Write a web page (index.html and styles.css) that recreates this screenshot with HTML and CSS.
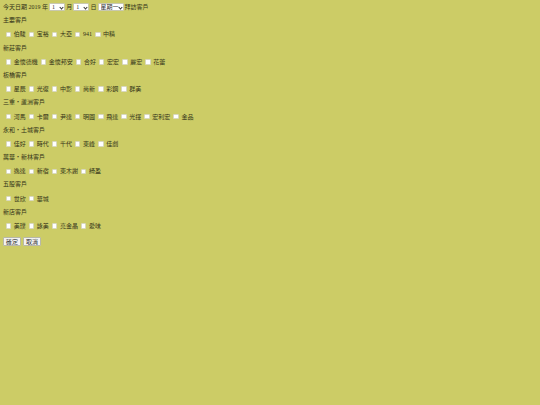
FILE: index.html
```html
<!DOCTYPE html>
<html lang="zh-Hant">
<head>
<meta charset="utf-8">
<title>拜訪客戶</title>
<link rel="stylesheet" href="styles.css">
</head>
<body>
<form class="page">
  <div class="date-line">
    <span>今天日期 2019 年</span>
    <span class="sel-wrap sel-num"><select class="sel"><option>1</option></select></span>
    <span>月</span>
    <span class="sel-wrap sel-num"><select class="sel"><option>1</option></select></span>
    <span>日</span>
    <span class="sel-wrap sel-week"><select class="sel"><option>星期一</option></select></span>
    <span>拜訪客戶</span>
  </div>

  <p class="group-title">主要客戶</p>
  <div class="row">
    <label class="item"><input type="checkbox">伯駿</label>
    <label class="item"><input type="checkbox">宝裕</label>
    <label class="item"><input type="checkbox">大亞</label>
    <label class="item"><input type="checkbox">941</label>
    <label class="item"><input type="checkbox">中精</label>
  </div>

  <p class="group-title">新莊客戶</p>
  <div class="row">
    <label class="item"><input type="checkbox">金懷德機</label>
    <label class="item"><input type="checkbox">金懷邦安</label>
    <label class="item"><input type="checkbox">合好</label>
    <label class="item"><input type="checkbox">宏宏</label>
    <label class="item"><input type="checkbox">麗宏</label>
    <label class="item"><input type="checkbox">花蕾</label>
  </div>

  <p class="group-title">板橋客戶</p>
  <div class="row">
    <label class="item"><input type="checkbox">星辰</label>
    <label class="item"><input type="checkbox">光復</label>
    <label class="item"><input type="checkbox">中影</label>
    <label class="item"><input type="checkbox">尚新</label>
    <label class="item"><input type="checkbox">彩鋼</label>
    <label class="item"><input type="checkbox">群美</label>
  </div>

  <p class="group-title">三重・蘆洲客戶</p>
  <div class="row">
    <label class="item"><input type="checkbox">河馬</label>
    <label class="item"><input type="checkbox">卡爾</label>
    <label class="item"><input type="checkbox">尹達</label>
    <label class="item"><input type="checkbox">明圓</label>
    <label class="item"><input type="checkbox">飛達</label>
    <label class="item"><input type="checkbox">光揮</label>
    <label class="item"><input type="checkbox">宏利宏</label>
    <label class="item"><input type="checkbox">金品</label>
  </div>

  <p class="group-title">永和・土城客戶</p>
  <div class="row">
    <label class="item"><input type="checkbox">佳好</label>
    <label class="item"><input type="checkbox">時代</label>
    <label class="item"><input type="checkbox">千代</label>
    <label class="item"><input type="checkbox">東峰</label>
    <label class="item"><input type="checkbox">佳劇</label>
  </div>

  <p class="group-title">萬華・新林客戶</p>
  <div class="row">
    <label class="item"><input type="checkbox">逸達</label>
    <label class="item"><input type="checkbox">新宿</label>
    <label class="item"><input type="checkbox">東木謝</label>
    <label class="item"><input type="checkbox">綺盈</label>
  </div>

  <p class="group-title">五股客戶</p>
  <div class="row">
    <label class="item"><input type="checkbox">世欣</label>
    <label class="item"><input type="checkbox">華城</label>
  </div>

  <p class="group-title">新店客戶</p>
  <div class="row">
    <label class="item"><input type="checkbox">美璞</label>
    <label class="item"><input type="checkbox">詠美</label>
    <label class="item"><input type="checkbox">亮金晶</label>
    <label class="item"><input type="checkbox">愛味</label>
  </div>

  <div class="actions">
    <button type="button" class="btn">確定</button>
    <button type="button" class="btn">取消</button>
  </div>
</form>
</body>
</html>
```

FILE: styles.css
```css
html, body {
  margin: 0;
  height: 100%;
  background: #cccc66;
}

.page {
  padding: 3px 0 0 3px;
  font-family: "Liberation Serif", "Noto Sans CJK TC", serif;
  font-size: 6px;
  line-height: 7px;
  color: #333318;
}

.date-line {
  display: flex;
  align-items: center;
  height: 8px;
  gap: 1.1px;
}

.sel-wrap {
  position: relative;
  display: block;
  height: 8px;
}

.sel-wrap::after {
  content: "";
  position: absolute;
  right: 2px;
  top: 2.5px;
  width: 2px;
  height: 2px;
  border-right: 0.7px solid #333;
  border-bottom: 0.7px solid #333;
  transform: rotate(45deg);
}

.sel-num {
  width: 16px;
}

.sel-week {
  width: 26px;
}

.sel {
  display: block;
  appearance: none;
  box-sizing: border-box;
  width: 100%;
  height: 8px;
  padding: 0 0 0 2px;
  margin: 0;
  border: 0.5px solid #c8c8b0;
  border-radius: 1px;
  background: #fff;
  color: #333;
  font: inherit;
  line-height: 7px;
}

.group-title {
  margin: 6.2px 0 0;
  height: 7px;
}

.row {
  display: flex;
  align-items: center;
  gap: 3px;
  height: 7px;
  margin-top: 7.2px;
  padding-left: 2.6px;
}

.item {
  display: flex;
  align-items: center;
  gap: 2.6px;
}

.item input {
  appearance: none;
  box-sizing: border-box;
  width: 5.5px;
  height: 5.5px;
  margin: 0 0 1px;
  border: 0.4px solid #d8d8c0;
  border-radius: 1px;
  background: #fff;
}

.actions {
  display: flex;
  gap: 2px;
  margin-top: 6.6px;
}

.btn {
  width: 18px;
  height: 9px;
  padding: 0;
  border: 0.5px solid #b8b8a8;
  border-radius: 1px;
  background: #f2f2f0;
  color: #333;
  font: inherit;
  line-height: 8px;
}
```
